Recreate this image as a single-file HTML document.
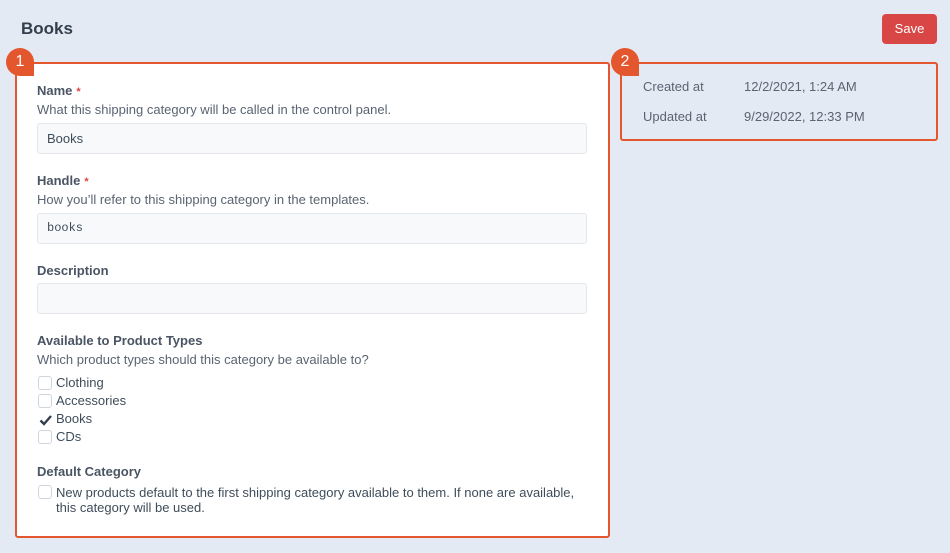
<!DOCTYPE html>
<html><head><style>
body{margin:0;width:950px;height:553px;background:#e4eaf4;font-family:"Liberation Sans",sans-serif;color:#3f4d5a;position:relative;overflow:hidden;font-size:13px}
.a{position:absolute}
h1{position:absolute;left:21px;top:19px;margin:0;font-size:17px;font-weight:bold;color:#333f4d}
.save{left:882px;top:14px;width:55px;height:30px;background:#d94646;border-radius:4px;color:#fff;font-size:13px;text-align:center;line-height:30px}
.panel{left:15px;top:62px;width:591px;height:472px;background:#fff;border:2px solid #e4572e;border-radius:3px}
.meta{left:620px;top:62px;width:314px;height:75px;border:2px solid #e4572e;border-radius:3px;background:#e4eaf4}
.lbl{position:absolute;left:37px;font-weight:bold;color:#4a5564}
.lbl i{color:#d94646;font-style:normal;font-size:11px;margin-left:4px}
.ins{position:absolute;left:37px;color:#5a6472}
.inp{position:absolute;left:37px;width:548px;height:29px;border:1px solid #e3e7ec;background:#f7f9fb;border-radius:3px;line-height:29px;padding-left:9px;box-sizing:content-box;width:539px;color:#3f4d5a}
.cb{position:absolute;left:38px;width:12px;height:12px;border:1px solid #cfd6de;border-radius:3px;background:#fff}
.ct{position:absolute;left:56px;color:#3f4d5a}
.badge{width:28px;height:28px;background:#e4572e;border-radius:50% 50% 0 50%;color:#fff;font-size:16px;text-align:center;line-height:28px}
</style></head><body>
<h1>Books</h1>
<div class="a save">Save</div>
<div class="a panel"></div>
<div class="a meta"></div>
<div class="a badge" style="left:6px;top:48px">1</div>
<div class="a badge" style="left:611px;top:48px">2</div>
<div class="a" style="left:643px;top:79px;color:#5a6472">Created at</div>
<div class="a" style="left:744px;top:79px;color:#5a6472">12/2/2021, 1:24 AM</div>
<div class="a" style="left:643px;top:109px;color:#5a6472">Updated at</div>
<div class="a" style="left:744px;top:109px;color:#5a6472">9/29/2022, 12:33 PM</div>

<div class="lbl" style="top:83px">Name<i>*</i></div>
<div class="ins" style="top:102px">What this shipping category will be called in the control panel.</div>
<div class="inp" style="top:123px">Books</div>
<div class="lbl" style="top:173px">Handle<i>*</i></div>
<div class="ins" style="top:192px">How you’ll refer to this shipping category in the templates.</div>
<div class="inp" style="top:213px;font-family:'Liberation Mono',monospace;font-size:12px">books</div>
<div class="lbl" style="top:263px">Description</div>
<div class="inp" style="top:283px"></div>
<div class="lbl" style="top:333px">Available to Product Types</div>
<div class="ins" style="top:352px">Which product types should this category be available to?</div>
<div class="cb" style="top:376px"></div><div class="ct" style="top:375px">Clothing</div>
<div class="cb" style="top:394px"></div><div class="ct" style="top:393px">Accessories</div>
<div class="cb" style="top:412px;border-color:transparent;background:none"><svg width="14" height="14" viewBox="0 0 14 14"><path d="M1.5 7.5l3.5 3.5 7-8" stroke="#333f4d" stroke-width="2.4" fill="none"/></svg></div><div class="ct" style="top:411px">Books</div>
<div class="cb" style="top:430px"></div><div class="ct" style="top:429px">CDs</div>
<div class="lbl" style="top:464px">Default Category</div>
<div class="cb" style="top:485px"></div>
<div class="ct" style="top:485px;line-height:15px">New products default to the first shipping category available to them. If none are available,<br>this category will be used.</div>
</body></html>
